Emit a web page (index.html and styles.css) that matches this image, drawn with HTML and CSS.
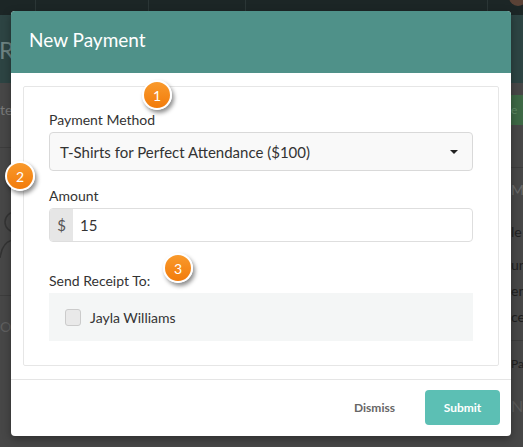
FILE: index.html
```html
<!DOCTYPE html>
<html>
<head>
<meta charset="utf-8">
<title>New Payment</title>
<link rel="stylesheet" href="styles.css">
</head>
<body>
<div class="app">
  <div class="topbar">
    <div class="cell c1"></div>
    <div class="cell c2"></div>
    <div class="cell c3"></div>
    <div class="cell c4"></div>
    <div class="cell c5"><div class="avatar"></div></div>
  </div>
  <div class="apphead"><span class="apptitle">Re</span></div>
  <div class="appmain">
    <div class="side-left">
      <div class="l-row l-first">te</div>
      <div class="l-row l-person">
        <svg width="11" height="148" viewBox="0 0 11 148"><circle cx="15" cy="74" r="10" fill="none" stroke="#333" stroke-width="1.5"/><path d="M0 110 C2 96 8 92 15 92" fill="none" stroke="#333" stroke-width="1.5"/></svg>
      </div>
      <div class="l-row l-od">OD</div>
    </div>
    <div class="side-right">
      <div class="r-gap"></div>
      <div class="r-btn">e</div>
      <div class="r-line"></div>
      <div class="r-ma">MA</div>
      <div class="r-item">le</div>
      <div class="r-item">un</div>
      <div class="r-item">en</div>
      <div class="r-item r-last">ce</div>
      <div class="r-pa">Pa</div>
      <div class="r-nd">ND</div>
    </div>
  </div>
</div>

<div class="modal">
  <div class="modal-header">New Payment</div>
  <div class="modal-body">
    <div class="panel">
      <div class="group">
        <div class="label">Payment Method</div>
        <div class="select"><span>T-Shirts for Perfect Attendance ($100)</span><span class="caret"></span></div>
      </div>
      <div class="group group-amount">
        <div class="label">Amount</div>
        <div class="input-group"><span class="addon">$</span><span class="input">15</span></div>
      </div>
      <div class="group-last">
        <div class="label">Send Receipt To:</div>
        <div class="receipt"><span class="checkbox"></span><span>Jayla Williams</span></div>
      </div>
    </div>
  </div>
  <div class="modal-footer">
    <span class="dismiss">Dismiss</span>
    <span class="submit">Submit</span>
  </div>
</div>

<div class="badge b1">1</div>
<div class="badge b2">2</div>
<div class="badge b3">3</div>
</body>
</html>
```
FILE: styles.css
```css
body {
  margin: 0;
  width: 523px;
  height: 447px;
  overflow: hidden;
  position: relative;
  background: #474747;
  font-family: Lato, "Open Sans", "DejaVu Sans", sans-serif;
}

/* background app (dimmed) */
.app {
  display: flex;
  flex-direction: column;
  height: 447px;
}
.topbar {
  height: 15px;
  background: #1c2626;
  display: flex;
}
.cell {
  box-sizing: border-box;
  height: 15px;
  border-right: 1px solid #2b3636;
}
.c1 { width: 36px; }
.c2 { width: 113px; }
.c3 { width: 97px; }
.c4 { width: 242px; }
.c5 { flex: 1; border-right: 0; display: flex; justify-content: flex-end; overflow: hidden; }
.avatar {
  width: 18px;
  height: 18px;
  margin-top: -12px;
  margin-right: -4px;
  border-radius: 50%;
  background: #5a4236;
}
.apphead {
  height: 68px;
  background: #2d4443;
  display: flex;
  align-items: center;
}
.apptitle {
  font-size: 24px;
  color: #6e8382;
  margin-left: -1px;
}
.appmain {
  flex: 1;
  display: flex;
  justify-content: space-between;
}
.side-left {
  width: 11px;
  overflow: hidden;
  display: flex;
  flex-direction: column;
}
.l-row {
  box-sizing: border-box;
  border-bottom: 1px solid #3d3d3d;
  font-size: 14px;
  color: #7a7a7a;
}
.l-first { height: 65px; padding-top: 18px; }
.l-person { height: 148px; }
.l-person svg { display: block; }
.l-od { height: 50px; padding-top: 22px; color: #5f5f5f; border-bottom: 0; }

.side-right {
  width: 12px;
  overflow: hidden;
  display: flex;
  flex-direction: column;
  font-size: 14px;
  white-space: nowrap;
}
.r-gap { height: 12px; }
.r-btn {
  height: 30px;
  background: #3d6845;
  color: #5e8a65;
  line-height: 30px;
  font-size: 12px;
}
.r-line { height: 42px; border-bottom: 1px solid #3d3d3d; }
.r-ma { height: 44px; line-height: 44px; color: #6a6a6a; }
.r-item { height: 26px; line-height: 26px; color: #1f1f1f; }
.r-ma + .r-item { height: 40px; line-height: 40px; }
.r-last { height: 36px; line-height: 26px; border-bottom: 1px solid #3d3d3d; }
.r-pa { height: 50px; line-height: 46px; font-size: 12px; color: #1f1f1f; }
.r-nd { height: 30px; line-height: 30px; font-size: 16px; color: #5a5a5a; }

/* modal */
.modal {
  position: absolute;
  left: 11px;
  top: 11px;
  width: 500px;
  background: #fff;
  border-radius: 4px;
  overflow: hidden;
  box-shadow: 0 3px 9px rgba(0, 0, 0, 0.35);
}
.modal-header {
  box-sizing: border-box;
  height: 62px;
  padding: 17px 18px 0;
  background: #4f9189;
  color: #fff;
  font-size: 19px;
  line-height: 23px;
}
.modal-body {
  padding: 13px 12px;
}
.panel {
  border: 1px solid #e6e6e6;
  border-radius: 2px;
  padding: 23px 25px 24px;
}
.label {
  font-size: 14px;
  line-height: 20px;
  color: #333;
  margin-bottom: 2px;
}
.group { margin-bottom: 15px; }
.group-amount { margin-bottom: 29px; }
.select {
  box-sizing: border-box;
  height: 39px;
  border: 1px solid #d9d9d9;
  border-radius: 4px;
  background: #f9f9f9;
  display: flex;
  align-items: center;
  justify-content: space-between;
  padding: 0 14px 0 10px;
  font-size: 15px;
  color: #333;
}
.caret {
  width: 0;
  height: 0;
  border-left: 4px solid transparent;
  border-right: 4px solid transparent;
  border-top: 4px solid #222;
}
.input-group {
  box-sizing: border-box;
  height: 34px;
  display: flex;
  border: 1px solid #dedede;
  border-radius: 4px;
  overflow: hidden;
}
.addon {
  width: 23px;
  background: #e6e6e6;
  display: flex;
  align-items: center;
  justify-content: center;
  font-size: 15px;
  color: #555;
}
.input {
  flex: 1;
  display: flex;
  align-items: center;
  padding-left: 7px;
  font-size: 15px;
  color: #333;
}
.receipt {
  height: 48px;
  background: #f4f6f6;
  display: flex;
  align-items: center;
  gap: 9px;
  padding-left: 16px;
  font-size: 14px;
  color: #333;
}
.checkbox {
  box-sizing: border-box;
  width: 16px;
  height: 17px;
  border: 1px solid #cbcbcb;
  border-radius: 3px;
  background: #e9e9e9;
}
.modal-footer {
  border-top: 1px solid #e5e5e5;
  padding: 10px 11px 11px;
  display: flex;
  justify-content: flex-end;
  align-items: center;
}
.dismiss {
  font-size: 12px;
  font-weight: 700;
  color: #666;
  margin-right: 30px;
}
.submit {
  width: 75px;
  height: 35px;
  border-radius: 4px;
  background: #5cbfb4;
  color: #fff;
  font-size: 12px;
  font-weight: 700;
  display: flex;
  align-items: center;
  justify-content: center;
}

/* callout badges */
.badge {
  position: absolute;
  box-sizing: border-box;
  width: 30px;
  height: 30px;
  border: 2px solid #fff;
  border-radius: 50%;
  background: linear-gradient(#f99a2c, #f27b0b);
  color: #fff;
  font-size: 14px;
  display: flex;
  align-items: center;
  justify-content: center;
  box-shadow: 2px 3px 4px rgba(0, 0, 0, 0.45);
}
.b1 { left: 142px; top: 80px; }
.b2 { left: 5px; top: 161px; }
.b3 { left: 163px; top: 253px; }
```
